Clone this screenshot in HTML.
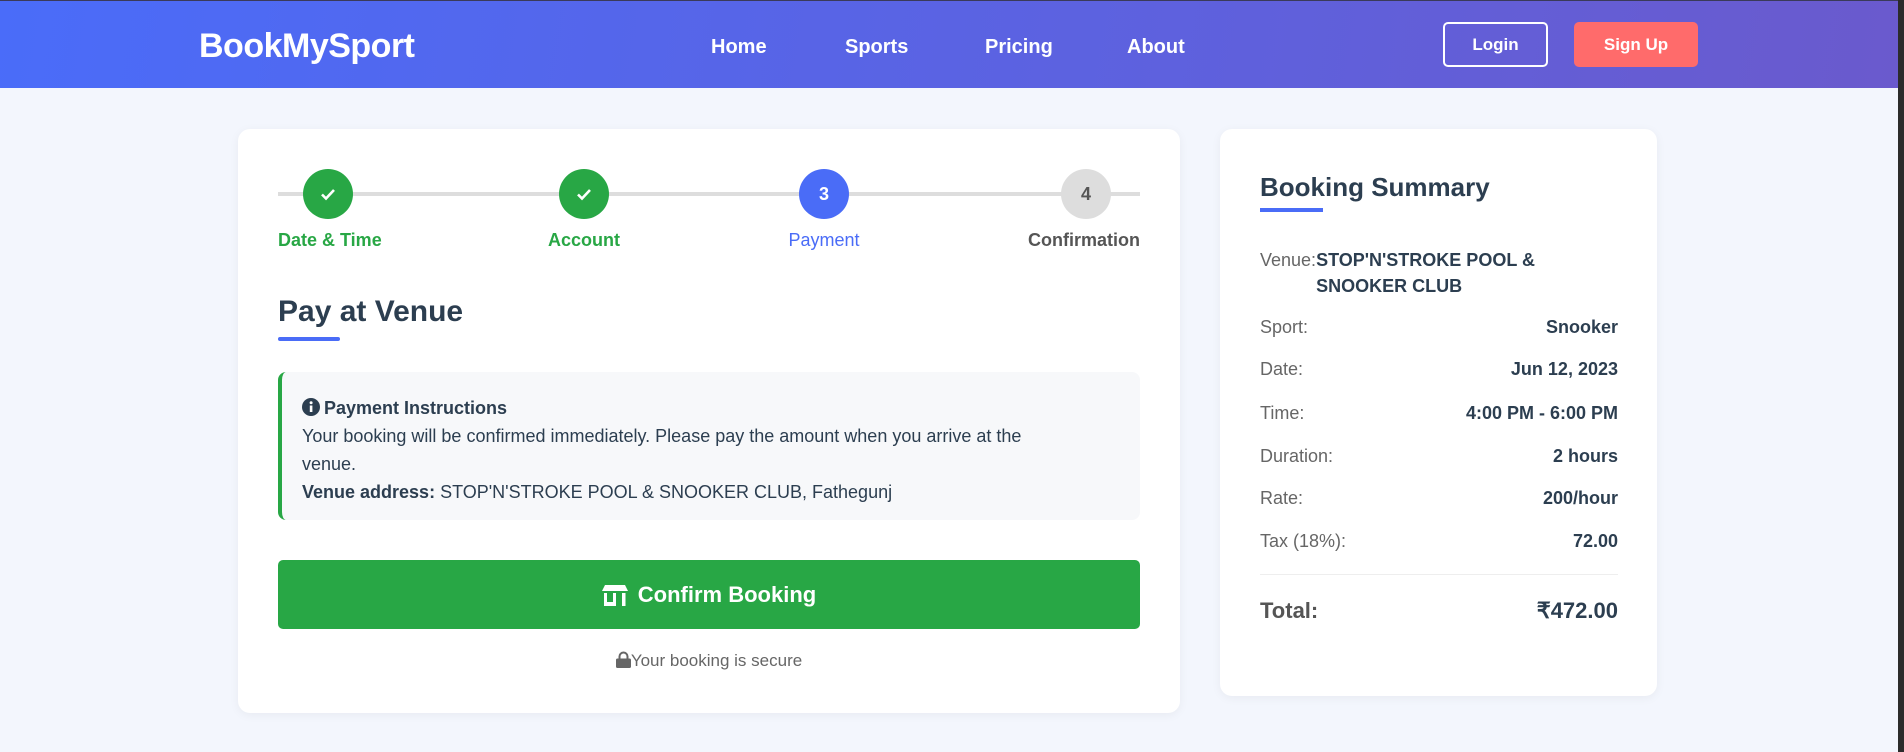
<!DOCTYPE html>
<html><head><meta charset="utf-8"><style>
*{margin:0;padding:0;box-sizing:border-box}
body{width:1904px;height:752px;overflow:hidden;background:#f3f6fd;font-family:"Liberation Sans",sans-serif;position:relative;color:#2c3e50}
.a{position:absolute}
.hdr{left:0;top:0;width:1898px;height:88px;background:linear-gradient(100deg,#4a6cf9,#6a5acd);border-top:1px solid #3a3a5a}
.strip{left:1898px;top:0;width:6px;height:752px;background:#2b2b2b}
.logo{left:199px;top:27px;font-size:34px;font-weight:700;color:#fff;letter-spacing:-0.5px}
.nav{top:36px;font-size:20px;font-weight:700;color:#fff}
.btn{top:22px;height:45px;border-radius:5px;color:#fff;font-size:17px;font-weight:700;display:flex;align-items:center;justify-content:center}
.card{background:#fff;border-radius:12px;box-shadow:0 2px 10px rgba(0,0,0,.05)}
.circ{width:50px;height:50px;border-radius:50%;top:169px;display:flex;align-items:center;justify-content:center;color:#fff;font-weight:700;font-size:18px}
.lbl{top:230px;font-size:18px;font-weight:700}
.row{left:1260px;width:358px;display:flex;justify-content:space-between;font-size:18px}
.row span:first-child{color:#666}
.row span:last-child{font-weight:700;color:#2c3e50}
</style></head><body>
<div class="a hdr"></div>
<div class="a strip"></div>
<div class="a logo">BookMySport</div>
<div class="a nav" style="left:711px">Home</div>
<div class="a nav" style="left:845px">Sports</div>
<div class="a nav" style="left:985px">Pricing</div>
<div class="a nav" style="left:1127px">About</div>
<div class="a btn" style="left:1443px;width:105px;border:2px solid #fff">Login</div>
<div class="a btn" style="left:1574px;width:124px;background:#ff6b6b">Sign Up</div>

<div class="a card" style="left:238px;top:129px;width:942px;height:584px"></div>
<div class="a" style="left:278px;top:192px;width:862px;height:4px;background:#ddd"></div>
<div class="a circ" style="left:303px;background:#28a745"><svg width="20" height="20" viewBox="0 0 20 20"><path d="M4 10.5l4 4 8-8.5" fill="none" stroke="#fff" stroke-width="2.6"/></svg></div>
<div class="a circ" style="left:559px;background:#28a745"><svg width="20" height="20" viewBox="0 0 20 20"><path d="M4 10.5l4 4 8-8.5" fill="none" stroke="#fff" stroke-width="2.6"/></svg></div>
<div class="a circ" style="left:799px;background:#4a6cf7">3</div>
<div class="a circ" style="left:1061px;background:#ddd;color:#555">4</div>
<div class="a lbl" style="left:278px;color:#28a745">Date &amp; Time</div>
<div class="a lbl" style="left:534px;width:100px;text-align:center;color:#28a745">Account</div>
<div class="a lbl" style="left:764px;width:120px;text-align:center;color:#4a6cf7;font-weight:400">Payment</div>
<div class="a lbl" style="left:980px;width:160px;text-align:right;color:#555">Confirmation</div>

<div class="a" style="left:278px;top:295px;font-size:30px;font-weight:700">Pay at Venue</div>
<div class="a" style="left:278px;top:337px;width:62px;height:4px;background:#4a6cf7;border-radius:2px"></div>

<div class="a" style="left:278px;top:372px;width:862px;height:148px;background:#f7f8fa;border-left:4px solid #28a745;border-radius:8px"></div>
<div class="a" style="left:302px;top:394px;font-size:18px;line-height:28px;width:740px">
<div style="font-weight:700"><svg width="18" height="18" viewBox="0 0 18 18" style="vertical-align:-2px;margin-right:4px"><circle cx="9" cy="9" r="9" fill="#2c3e50"/><rect x="7.8" y="7.5" width="2.6" height="6.5" fill="#fff"/><circle cx="9.1" cy="4.8" r="1.5" fill="#fff"/></svg>Payment Instructions</div>
<div>Your booking will be confirmed immediately. Please pay the amount when you arrive at the venue.</div>
<div><b>Venue address:</b> STOP'N'STROKE POOL &amp; SNOOKER CLUB, Fathegunj</div>
</div>

<div class="a" style="left:278px;top:560px;width:862px;height:69px;background:#28a745;border-radius:5px;display:flex;align-items:center;justify-content:center;color:#fff;font-size:22px;font-weight:700">
<svg width="26" height="22" viewBox="0 0 26 22" style="margin-right:10px"><path d="M3 1h20l3 6H0z" fill="#fff"/><rect x="20" y="9" width="3.5" height="13" fill="#fff"/><rect x="2" y="9" width="3" height="13" fill="#fff"/><rect x="2" y="18" width="12" height="4" fill="#fff"/><rect x="11" y="9" width="3" height="13" fill="#fff"/></svg>Confirm Booking</div>
<div class="a" style="left:278px;top:651px;width:862px;text-align:center;font-size:17px;color:#666"><svg width="15" height="17" viewBox="0 0 15 17" style="vertical-align:-2px"><path d="M3.5 8V5.5a4 4 0 018 0V8" fill="none" stroke="#666" stroke-width="2"/><rect x="0" y="7.5" width="15" height="9.5" rx="1.5" fill="#666"/></svg>Your booking is secure</div>

<div class="a card" style="left:1220px;top:129px;width:437px;height:567px"></div>
<div class="a" style="left:1260px;top:172px;font-size:26px;font-weight:700">Booking Summary</div>
<div class="a" style="left:1260px;top:208px;width:63px;height:4px;background:#4a6cf7"></div>
<div class="a" style="left:1260px;top:247px;font-size:18px;line-height:26px;display:flex"><span style="color:#666">Venue:</span><span style="font-weight:700;width:250px">STOP'N'STROKE POOL &amp; SNOOKER CLUB</span></div>
<div class="a row" style="top:317px"><span>Sport:</span><span>Snooker</span></div>
<div class="a row" style="top:359px"><span>Date:</span><span>Jun 12, 2023</span></div>
<div class="a row" style="top:403px"><span>Time:</span><span>4:00 PM - 6:00 PM</span></div>
<div class="a row" style="top:446px"><span>Duration:</span><span>2 hours</span></div>
<div class="a row" style="top:488px"><span>Rate:</span><span>200/hour</span></div>
<div class="a row" style="top:531px"><span>Tax (18%):</span><span>72.00</span></div>
<div class="a" style="left:1260px;top:574px;width:358px;height:1px;background:#eee"></div>
<div class="a row" style="top:598px;font-size:22px"><span style="font-weight:700;color:#555!important">Total:</span><span>₹472.00</span></div>
</body></html>
